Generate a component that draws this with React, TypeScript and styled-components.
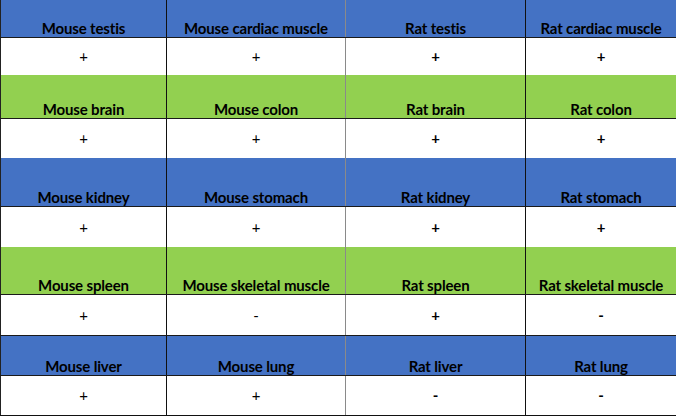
import React from "react";
import styled, { createGlobalStyle } from "styled-components";

const Global = createGlobalStyle`
  html, body { margin: 0; padding: 0; background: #ffffff; }
  body { font-family: Lato, "Open Sans", sans-serif; }
`;

const Table = styled.div`
  width: 676px;
  display: flex;
  flex-direction: column;
  border-bottom: 1px solid #111;
  box-sizing: border-box;
`;

const Row = styled.div<{ $bg: string; $h: number; $line?: boolean }>`
  display: grid;
  grid-template-columns: 166px 179px 180px 151px;
  height: ${(p) => p.$h}px;
  background: ${(p) => p.$bg};
  box-sizing: border-box;
  border-bottom: ${(p) => (p.$line ? "1px solid #1a1a1a" : "none")};
`;

const Cell = styled.div<{ $kind: "head" | "body"; $edge: string; $bold?: boolean }>`
  display: flex;
  justify-content: center;
  align-items: ${(p) => (p.$kind === "head" ? "flex-end" : "center")};
  padding-bottom: ${(p) => (p.$kind === "head" ? "1px" : "0")};
  box-sizing: border-box;
  border-left: 1px solid ${(p) => p.$edge};
  font-size: 15px;
  line-height: 15px;
  font-weight: ${(p) => (p.$kind === "head" || p.$bold ? 700 : 400)};
  color: #000;
  letter-spacing: -0.15px;
  white-space: nowrap;
`;

const edges = ["#222", "#111", "#8a8a8a", "#111"];

type Block = { names: string[]; values: string[]; color: string; hh: number; bh: number };

const BLUE = "#4472c4";
const GREEN = "#92d050";

const blocks: Block[] = [
  { names: ["Mouse testis", "Mouse cardiac muscle", "Rat testis", "Rat cardiac muscle"], values: ["+", "+", "+", "+"], color: BLUE, hh: 38, bh: 37 },
  { names: ["Mouse brain", "Mouse colon", "Rat brain", "Rat colon"], values: ["+", "+", "+", "+"], color: GREEN, hh: 44, bh: 39 },
  { names: ["Mouse kidney", "Mouse stomach", "Rat kidney", "Rat stomach"], values: ["+", "+", "+", "+"], color: BLUE, hh: 49, bh: 40 },
  { names: ["Mouse spleen", "Mouse skeletal muscle", "Rat spleen", "Rat skeletal muscle"], values: ["+", "-", "+", "-"], color: GREEN, hh: 48, bh: 41 },
  { names: ["Mouse liver", "Mouse lung", "Rat liver", "Rat lung"], values: ["+", "+", "-", "-"], color: BLUE, hh: 40, bh: 39 },
];

export default function App() {
  return (
    <>
      <Global />
      <Table>
        {blocks.map((b, i) => (
          <React.Fragment key={i}>
            <Row $bg={b.color} $h={b.hh} $line>
              {b.names.map((n, j) => (
                <Cell key={j} $kind="head" $edge={edges[j]}>
                  {n}
                </Cell>
              ))}
            </Row>
            <Row $bg="#ffffff" $h={b.bh} $line={i === 3}>
              {b.values.map((v, j) => (
                <Cell key={j} $kind="body" $edge={edges[j]} $bold={j >= 2}>
                  {v}
                </Cell>
              ))}
            </Row>
          </React.Fragment>
        ))}
      </Table>
    </>
  );
}
